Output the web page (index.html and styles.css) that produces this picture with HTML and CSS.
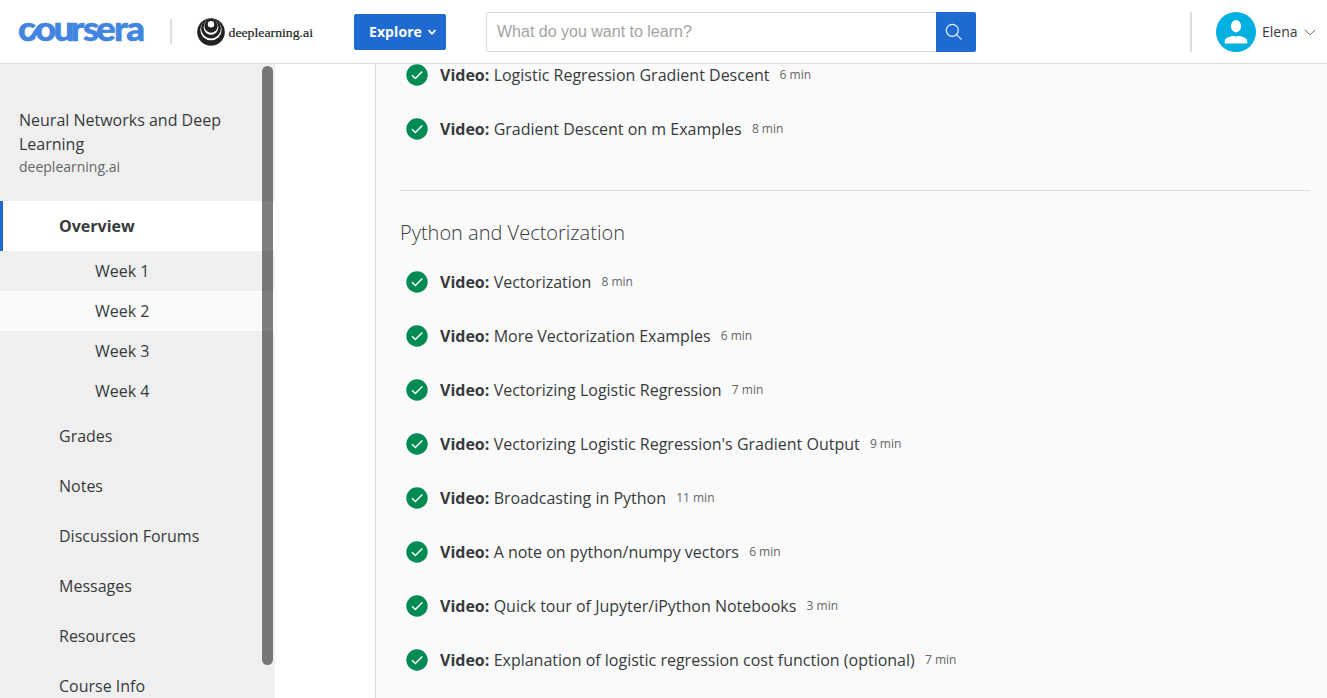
FILE: index.html
```html
<!DOCTYPE html>
<html lang="en">
<head>
<meta charset="utf-8">
<title>Neural Networks and Deep Learning | Coursera</title>
<link rel="stylesheet" href="styles.css">
</head>
<body>
<svg width="0" height="0" class="defs">
  <symbol id="check" viewBox="0 0 22 22"><circle cx="11" cy="11" r="10.7" fill="#008a54"/><path d="M6 11.2l3.4 3.3 6.9-7" fill="none" stroke="#fff" stroke-width="1.5"/></symbol>
</svg>
<header class="header">
  <svg class="brand" width="134" height="50" viewBox="0 0 134 50">
    <text transform="translate(0 34.2) scale(1.08 1)" x="0 15.8 32.800 48.700 60.200 72.200 88.800 100.300">coursera</text>
    <path d="M11 32.200C17.500 30.500 17.500 20.500 25 18.200" />
  </svg>
  <span class="rule rule-brand"></span>
  <div class="partner">
    <svg width="28" height="28" viewBox="0 0 28 28">
      <circle cx="14" cy="14" r="13.8" fill="#222"/>
      <circle cx="14" cy="11.700" r="10.600" fill="#fff"/>
      <circle cx="14" cy="10.600" r="9.900" fill="#222"/>
      <circle cx="14" cy="9.300" r="7.400" fill="#fff"/>
      <circle cx="14" cy="8.200" r="6.600" fill="#222"/>
      <circle cx="14" cy="6.300" r="3.200" fill="#fff"/>
    </svg>
    <svg class="partner-name" width="88" height="24" viewBox="0 0 88 24"><text x="0.5" y="16.500" textLength="84.500" lengthAdjust="spacingAndGlyphs">deeplearning.ai</text></svg>
  </div>
  <button class="explore">Explore
    <svg width="10" height="8" viewBox="0 0 10 8"><path d="M1.5 2.2L5 5.700l3.500-3.500" fill="none" stroke="#fff" stroke-width="1.8"/></svg>
  </button>
  <div class="search">
    <div class="field">What do you want to learn?</div>
    <div class="search-btn"><svg width="18" height="18" viewBox="0 0 18 18" fill="none" stroke="#e8effa" stroke-width="1.2"><circle cx="7.3" cy="7.3" r="6"/><path d="M11.6 11.6l5 5"/></svg></div>
  </div>
  <div class="account">
    <svg width="40" height="40" viewBox="0 0 40 40"><circle cx="20" cy="20" r="20" fill="#00b0e0"/><ellipse cx="20" cy="14.2" rx="5" ry="6.200" fill="#fff"/><path d="M8.700 31.500v-2.200c0-3.500 5-4.800 8.600-5.600 1.600.9 3.800.9 5.400 0 3.600.8 8.600 2.100 8.600 5.600v2.200z" fill="#fff"/></svg>
    <span class="user">Elena</span>
    <svg width="12" height="8" viewBox="0 0 12 8"><path d="M.8 1.800L6 6.800l5.200-5" fill="none" stroke="#666" stroke-width="1"/></svg>
  </div>
</header>
<div class="layout">
  <aside class="sidebar">
    <div class="course">
      <div class="course-title">Neural Networks and Deep Learning</div>
      <div class="course-partner">deeplearning.ai</div>
    </div>
    <nav>
      <div class="item active">Overview</div>
      <div class="week">Week 1</div>
      <div class="week current">Week 2</div>
      <div class="week">Week 3</div>
      <div class="week">Week 4</div>
      <div class="item">Grades</div>
      <div class="item">Notes</div>
      <div class="item">Discussion Forums</div>
      <div class="item">Messages</div>
      <div class="item">Resources</div>
      <div class="item">Course Info</div>
    </nav>
    <div class="scrollbar"></div>
  </aside>
  <main class="content">
    <section class="lessons first">
      <div class="row"><svg><use href="#check"/></svg><b>Video:</b><span>Logistic Regression Gradient Descent</span><small>6 min</small></div>
      <div class="row"><svg><use href="#check"/></svg><b>Video:</b><span>Gradient Descent on m Examples</span><small>8 min</small></div>
    </section>
    <section class="lessons next">
      <h2>Python and Vectorization</h2>
      <div class="row"><svg><use href="#check"/></svg><b>Video:</b><span>Vectorization</span><small>8 min</small></div>
      <div class="row"><svg><use href="#check"/></svg><b>Video:</b><span>More Vectorization Examples</span><small>6 min</small></div>
      <div class="row"><svg><use href="#check"/></svg><b>Video:</b><span>Vectorizing Logistic Regression</span><small>7 min</small></div>
      <div class="row"><svg><use href="#check"/></svg><b>Video:</b><span>Vectorizing Logistic Regression's Gradient Output</span><small>9 min</small></div>
      <div class="row"><svg><use href="#check"/></svg><b>Video:</b><span>Broadcasting in Python</span><small>11 min</small></div>
      <div class="row"><svg><use href="#check"/></svg><b>Video:</b><span>A note on python/numpy vectors</span><small>6 min</small></div>
      <div class="row"><svg><use href="#check"/></svg><b>Video:</b><span>Quick tour of Jupyter/iPython Notebooks</span><small>3 min</small></div>
      <div class="row"><svg><use href="#check"/></svg><b>Video:</b><span>Explanation of logistic regression cost function (optional)</span><small>7 min</small></div>
    </section>
  </main>
</div>
</body>
</html>
```
FILE: styles.css
```css
* { box-sizing: border-box; }
body { margin: 0; height: 698px; overflow: hidden; display: flex; flex-direction: column; font-family: "Open Sans", sans-serif; font-size: 16px; color: #373a3c; background: #fff; }
svg { display: block; flex: none; }
.defs { position: absolute; }
.header { height: 64px; flex: none; display: flex; align-items: center; border-bottom: 1px solid #dcdcdc; background: #fff; padding-left: 18px; }
.brand { overflow: visible; }
.brand text { font-family: Lato, sans-serif; font-weight: 900; font-size: 34px; fill: #4285e0; stroke: #4285e0; stroke-width: .5; }
.brand path { fill: none; stroke: #4285e0; stroke-width: 4.5; }
.rule { width: 2px; background: #dedede; }
.rule-brand { height: 25px; margin-left: 18px; }
.partner { display: flex; align-items: center; margin-left: 25px; width: 157px; gap: 3px; }
.partner-name text { font-family: "Liberation Serif", serif; font-size: 13px; fill: #222; stroke: #222; stroke-width: .2; }
.explore { width: 92px; height: 36px; border: 0; border-radius: 2px; background: #1f6ad1; color: #fff; font: 700 14px "Open Sans", sans-serif; letter-spacing: .08px; padding: 0 0 0 15px; display: flex; align-items: center; gap: 5px; }
.search { display: flex; height: 40px; margin-left: 40px; }
.field { width: 450px; border: 1px solid #dcdcdc; border-right: 0; border-radius: 2px 0 0 2px; padding-left: 10px; line-height: 37px; font-family: "Liberation Sans", sans-serif; color: #a3a3a3; }
.search-btn { width: 40px; background: #1f6ad1; border-radius: 0 2px 2px 0; padding: 11px 0 0 9px; }
.account { display: flex; align-items: center; height: 40px; margin-left: 214px; padding-left: 24px; border-left: 2px solid #dedede; }
.user { font-size: 14px; margin: 0 6px; }
.layout { display: flex; flex: 1; min-height: 0; }
.sidebar { width: 275px; background: #efefef; position: relative; overflow: hidden; }
.course { height: 137px; padding: 44px 40px 0 19px; line-height: 24px; }
.course-partner { font-size: 14px; line-height: 22px; color: #666; }
.item { height: 50px; line-height: 50px; padding-left: 59px; }
.item.active { background: #fff; font-weight: 700; border-left: 3px solid #1f6ad1; padding-left: 56px; }
.week { height: 40px; line-height: 40px; padding-left: 95px; }
.current { background: #fafafa; }
.scrollbar { position: absolute; left: 262px; top: 2px; width: 11px; height: 599px; border-radius: 6px; background: rgba(0, 0, 0, .5); }
.content { margin-left: 100px; flex: 1; border-left: 1px solid #dcdcdc; background: #fafafa; padding: 0 17px 0 24px; overflow: hidden; }
.first { margin-top: -16px; height: 143px; border-bottom: 1px solid #dcdcdc; }
.row { height: 54px; display: flex; align-items: center; padding-left: 6px; white-space: nowrap; }
.row svg { width: 22px; height: 22px; }
.row b { margin: 0 4.3px 0 12px; }
.row small { font-size: 12px; margin: -1px 0 0 10.2px; color: #666; }
h2 { margin: 0; padding-top: 27px; height: 64px; font-weight: 300; font-size: 20px; line-height: 30px; }
```
